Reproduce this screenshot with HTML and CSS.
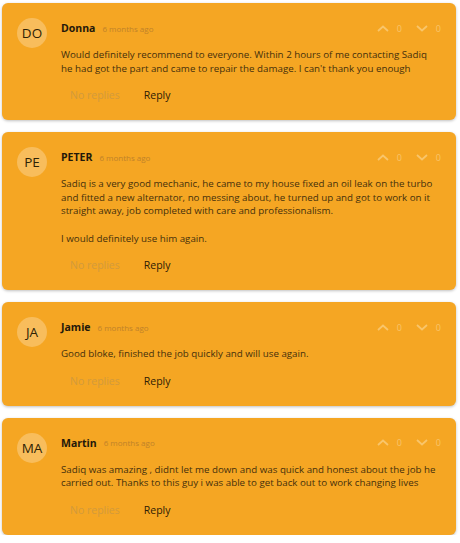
FILE: index.html
```html
<!DOCTYPE html>
<html lang="en">
<head>
    <meta charset="UTF-8">
    <meta name="viewport" content="width=device-width, initial-scale=1.0">
    <title>Reviews</title>
    <link rel="stylesheet" href="styles.css">
</head>
<body>
    <div class="comments">
        <div class="comment">
            <div class="avatar">DO</div>
            <div class="comment-body">
                <div class="comment-head">
                    <span class="name">Donna</span>
                    <span class="time">6 months ago</span>
                    <div class="votes">
                        <svg class="chev" viewBox="0 0 12 7"><path d="M1 6L6 1.5L11 6"/></svg><span>0</span>
                        <svg class="chev" viewBox="0 0 12 7"><path d="M1 1L6 5.5L11 1"/></svg><span>0</span>
                    </div>
                </div>
                <p class="text">Would definitely recommend to everyone. Within 2 hours of me contacting Sadiq he had got the part and came to repair the damage. I can't thank you enough</p>
                <div class="actions">
                    <button type="button" class="no-replies">No replies</button>
                    <button type="button" class="reply">Reply</button>
                </div>
            </div>
        </div>

        <div class="comment">
            <div class="avatar">PE</div>
            <div class="comment-body">
                <div class="comment-head">
                    <span class="name">PETER</span>
                    <span class="time">6 months ago</span>
                    <div class="votes">
                        <svg class="chev" viewBox="0 0 12 7"><path d="M1 6L6 1.5L11 6"/></svg><span>0</span>
                        <svg class="chev" viewBox="0 0 12 7"><path d="M1 1L6 5.5L11 1"/></svg><span>0</span>
                    </div>
                </div>
                <p class="text">Sadiq is a very good mechanic, he came to my house fixed an oil leak on the turbo and fitted a new alternator, no messing about, he turned up and got to work on it straight away, job completed with care and professionalism.</p>
                <p class="text">I would definitely use him again.</p>
                <div class="actions">
                    <button type="button" class="no-replies">No replies</button>
                    <button type="button" class="reply">Reply</button>
                </div>
            </div>
        </div>

        <div class="comment">
            <div class="avatar">JA</div>
            <div class="comment-body">
                <div class="comment-head">
                    <span class="name">Jamie</span>
                    <span class="time">6 months ago</span>
                    <div class="votes">
                        <svg class="chev" viewBox="0 0 12 7"><path d="M1 6L6 1.5L11 6"/></svg><span>0</span>
                        <svg class="chev" viewBox="0 0 12 7"><path d="M1 1L6 5.5L11 1"/></svg><span>0</span>
                    </div>
                </div>
                <p class="text">Good bloke, finished the job quickly and will use again.</p>
                <div class="actions">
                    <button type="button" class="no-replies">No replies</button>
                    <button type="button" class="reply">Reply</button>
                </div>
            </div>
        </div>

        <div class="comment">
            <div class="avatar">MA</div>
            <div class="comment-body">
                <div class="comment-head">
                    <span class="name">Martin</span>
                    <span class="time">6 months ago</span>
                    <div class="votes">
                        <svg class="chev" viewBox="0 0 12 7"><path d="M1 6L6 1.5L11 6"/></svg><span>0</span>
                        <svg class="chev" viewBox="0 0 12 7"><path d="M1 1L6 5.5L11 1"/></svg><span>0</span>
                    </div>
                </div>
                <p class="text">Sadiq was amazing , didnt let me down and was quick and honest about the job he carried out. Thanks to this guy i was able to get back out to work changing lives</p>
                <div class="actions">
                    <button type="button" class="no-replies">No replies</button>
                    <button type="button" class="reply">Reply</button>
                </div>
            </div>
        </div>
    </div>
</body>
</html>
```

FILE: styles.css
```css
body {
    margin: 0;
    background: #fff;
    font-family: "Open Sans", "Liberation Sans", sans-serif;
}
.comments {
    display: flex;
    flex-direction: column;
    gap: 12px;
    padding: 3px 4px 0 2px;
}
.comment {
    display: flex;
    gap: 14px;
    background-color: #f5a623;
    border-radius: 6px;
    box-shadow: 0 1px 3px rgba(0, 0, 0, 0.25);
    padding: 15px 14px 15px 15px;
}
.avatar {
    flex: none;
    width: 30px;
    height: 30px;
    border-radius: 50%;
    background-color: #f8bd5c;
    color: #2e2205;
    font-size: 13.5px;
    display: flex;
    align-items: center;
    justify-content: center;
}
.comment-body {
    flex: 1;
}
.comment-head {
    display: flex;
    align-items: center;
    height: 20px;
}
.name {
    font-size: 10.5px;
    font-weight: 700;
    color: #24180a;
}
.time {
    font-size: 8px;
    color: #c0822a;
    margin-left: 7px;
}
.votes {
    margin-left: auto;
    margin-right: 1px;
    display: flex;
    align-items: center;
    color: #f9c56a;
    font-size: 9px;
}
.votes span {
    margin: 0 0 0 8px;
}
.chev {
    width: 12px;
    height: 7px;
    fill: none;
    stroke: #f9c56a;
    stroke-width: 1.8;
    margin-left: 14px;
}
.chev:first-child {
    margin-left: 0;
}
.text {
    margin: 10px 0 0 0;
    max-width: 375px;
    font-size: 9.75px;
    line-height: 13.5px;
    color: #45300c;
}
.text + .text {
    margin-top: 14px;
}
.actions {
    display: flex;
    margin-top: 10px;
}
.actions button {
    background: none;
    border: 0;
    font-family: inherit;
    font-size: 10.5px;
    line-height: 20px;
    padding: 0 9px;
}
.no-replies {
    color: #d29a3c;
}
.reply {
    color: #2e2005;
    margin-left: 6px;
}
```
